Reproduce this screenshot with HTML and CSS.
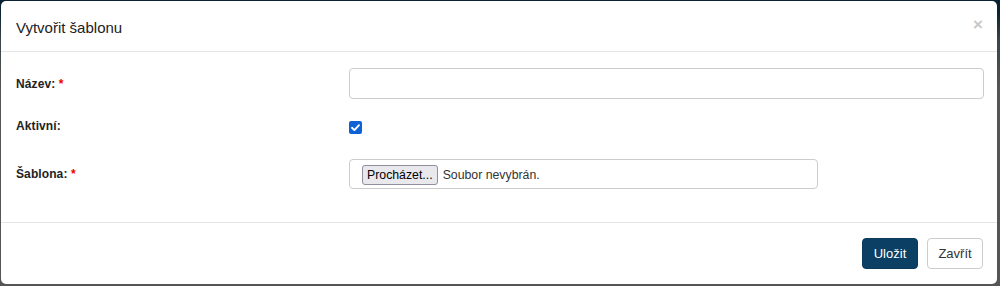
FILE: index.html
```html
<!DOCTYPE html>
<html lang="cs">
<head>
<meta charset="utf-8">
<title>Vytvořit šablonu</title>
<link rel="stylesheet" href="styles.css">
</head>
<body>
<div class="modal">
  <div class="modal-header">
    <h4 class="modal-title">Vytvořit šablonu</h4>
    <span class="close">×</span>
  </div>
  <div class="modal-body">
    <div class="form-row">
      <label class="control-label">Název: <span class="req">*</span></label>
      <div class="control"><div class="text-input"></div></div>
    </div>
    <div class="form-row row-check">
      <label class="control-label">Aktivní:</label>
      <div class="control">
        <span class="checkbox">
          <svg viewBox="0 0 13 13" width="13" height="13"><path d="M3 6.8 L5.4 9.1 L10 4.2" fill="none" stroke="#fff" stroke-width="1.9" stroke-linecap="round" stroke-linejoin="round"/></svg>
        </span>
      </div>
    </div>
    <div class="form-row">
      <label class="control-label">Šablona: <span class="req">*</span></label>
      <div class="control">
        <div class="file-input"><span class="file-btn">Procházet...</span><span class="file-name">Soubor nevybrán.</span></div>
      </div>
    </div>
  </div>
  <div class="modal-footer">
    <span class="btn btn-primary">Uložit</span>
    <span class="btn btn-default">Zavřít</span>
  </div>
</div>
</body>
</html>
```
FILE: styles.css
```css
html, body {
  margin: 0;
  padding: 0;
}
body {
  width: 1000px;
  height: 286px;
  overflow: hidden;
  background: linear-gradient(to bottom, #0a2230 0px, #0a2230 12px, #3a4449 40px, #555 90px, #555 100%);
  font-family: "Liberation Sans", Arial, sans-serif;
  color: #333;
}
.modal {
  margin: 1px 0 0 1px;
  width: 996px;
  height: 283px;
  background: #fff;
  border-radius: 5px;
  display: flex;
  flex-direction: column;
  box-sizing: border-box;
}
.modal-header {
  height: 51px;
  box-sizing: border-box;
  border-bottom: 1px solid #e5e5e5;
  display: flex;
  align-items: center;
  justify-content: space-between;
  padding: 0 14px 0 15px;
}
.modal-title {
  margin: 0;
  font-size: 15px;
  font-weight: normal;
  color: #222;
  padding-top: 3px;
}
.close {
  font-size: 17px;
  font-weight: bold;
  color: #c8c8c8;
  line-height: 1;
  margin-top: -3px;
}
.modal-body {
  flex: 1;
  padding: 16px 13px 0 15px;
  display: flex;
  flex-direction: column;
  gap: 15px;
}
.form-row {
  display: grid;
  grid-template-columns: 333px 1fr;
  align-items: center;
  height: 30px;
}
.form-row:first-child {
  height: 31px;
}
.control-label {
  font-size: 12px;
  font-weight: bold;
  color: #222;
  line-height: 15px;
  padding-top: 1px;
  letter-spacing: 0.1px;
}
.row-check .control-label {
  align-self: start;
  padding-top: 5px;
}
.row-check .control {
  align-self: start;
  padding-top: 7px;
  line-height: 0;
}
.req {
  color: #e00;
}
.text-input {
  height: 31px;
  box-sizing: border-box;
  border: 1px solid #ccc;
  border-radius: 4px;
  background: #fff;
}
.checkbox {
  display: inline-block;
  width: 13px;
  height: 13px;
  border-radius: 2px;
  background: #0d63d6;
}
.checkbox svg {
  display: block;
}
.file-input {
  width: 469px;
  height: 30px;
  box-sizing: border-box;
  border: 1px solid #ccc;
  border-radius: 4px;
  display: flex;
  align-items: center;
  padding-left: 12px;
  font-size: 12.3px;
}
.file-btn {
  display: inline-block;
  height: 20px;
  line-height: 18px;
  box-sizing: border-box;
  padding: 0 4px;
  background: #e9e9ed;
  border: 1px solid #8f8f9d;
  border-radius: 3px;
  color: #000;
  margin-right: 5px;
  margin-top: 2px;
}
.file-name {
  color: #333;
  margin-top: 2px;
}
.modal-footer {
  height: 62px;
  box-sizing: border-box;
  border-top: 1px solid #e5e5e5;
  display: flex;
  justify-content: flex-end;
  align-items: flex-start;
  gap: 9px;
  padding: 15px 14px 0 0;
}
.btn {
  display: inline-flex;
  align-items: center;
  justify-content: center;
  width: 56px;
  height: 31px;
  box-sizing: border-box;
  border-radius: 4px;
  font-size: 13px;
  border: 1px solid transparent;
}
.btn-primary {
  background: #0b4064;
  border-color: #0a3a5c;
  color: #fff;
}
.btn-default {
  background: #fff;
  border-color: #ccc;
  color: #333;
}
```
